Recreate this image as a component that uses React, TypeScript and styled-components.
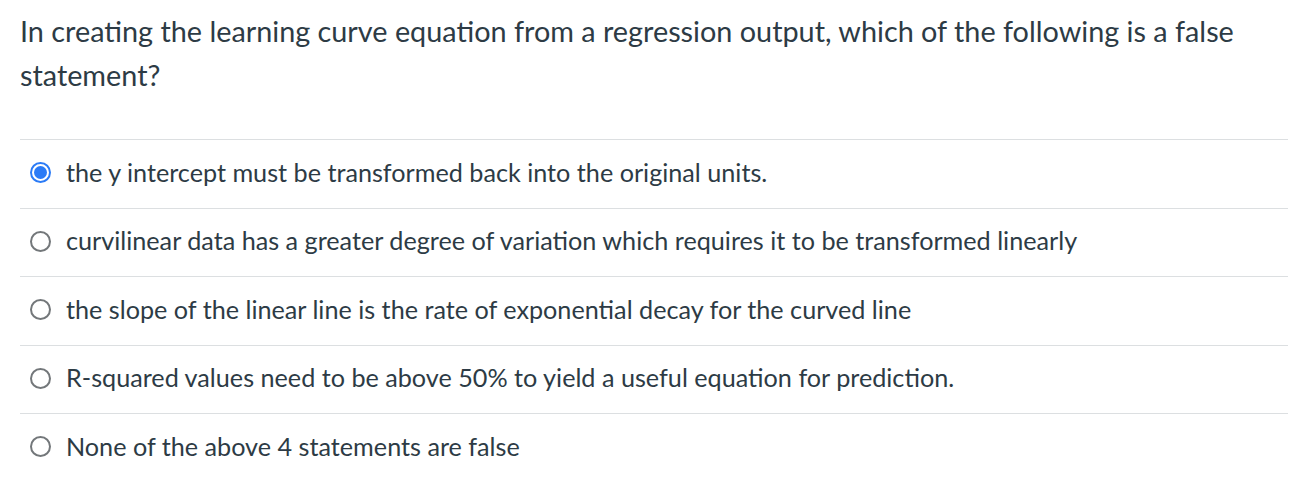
import React from "react";
import styled, { createGlobalStyle } from "styled-components";

const GlobalStyle = createGlobalStyle`
  body {
    margin: 0;
    background: #ffffff;
    font-family: Lato, "Open Sans", sans-serif;
    color: #2d3b45;
  }
`;

const Page = styled.div`
  padding: 9px 12px 0 20px;
`;

const Question = styled.p`
  margin: 0 0 42px 0;
  font-size: 28.8px;
  line-height: 44px;
  color: #2d3b45;
`;

const Answers = styled.div`
  display: flex;
  flex-direction: column;
`;

const Row = styled.label`
  box-sizing: content-box;
  display: flex;
  align-items: center;
  gap: 15px;
  height: 63px;
  padding: 0 0 4.5px 10px;
  border-top: 1px solid #dcdfe1;
  font-size: 25.2px;
  color: #2d3b45;
  cursor: pointer;
`;

const Radio = styled.span<{ checked?: boolean }>`
  box-sizing: border-box;
  width: 21px;
  height: 21px;
  flex-shrink: 0;
  margin-top: 2px;
  border-radius: 50%;
  border: 2px solid ${(p) => (p.checked ? "#2b7bf6" : "#73777a")};
  display: flex;
  align-items: center;
  justify-content: center;

  &::after {
    content: "";
    display: ${(p) => (p.checked ? "block" : "none")};
    width: 13px;
    height: 13px;
    border-radius: 50%;
    background: #2b7bf6;
  }
`;

const answers = [
  "the y intercept must be transformed back into the original units.",
  "curvilinear data has a greater degree of variation which requires it to be transformed linearly",
  "the slope of the linear line is the rate of exponential decay for the curved line",
  "R-squared values need to be above 50% to yield a useful equation for prediction.",
  "None of the above 4 statements are false",
];

export default function App() {
  const [selected, setSelected] = React.useState(0);
  return (
    <>
      <GlobalStyle />
      <Page>
        <Question>
          In creating the learning curve equation from a regression output,
          which of the following is a false statement?
        </Question>
        <Answers>
          {answers.map((a, i) => (
            <Row key={i} onClick={() => setSelected(i)}>
              <Radio checked={selected === i} />
              <span>{a}</span>
            </Row>
          ))}
        </Answers>
      </Page>
    </>
  );
}
